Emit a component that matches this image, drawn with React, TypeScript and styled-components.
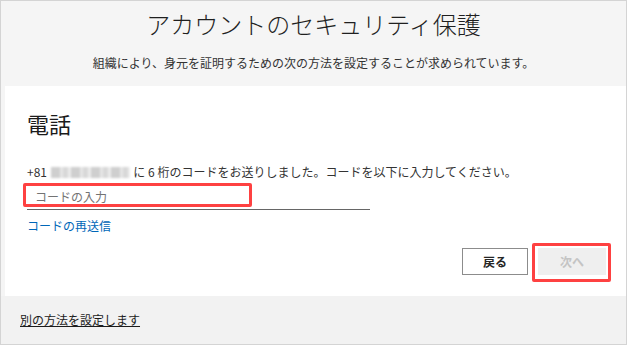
import React from 'react';
import styled, { createGlobalStyle } from 'styled-components';

const GlobalStyle = createGlobalStyle`
  body {
    margin: 0;
    background: #ffffff;
    font-family: "Noto Sans CJK JP", "Noto Sans", sans-serif;
  }
`;

const Frame = styled.div`
  box-sizing: border-box;
  width: 627px;
  height: 345px;
  border: 1px solid #d4d4d4;
  background: #f5f5f5;
  display: flex;
  flex-direction: column;
  overflow: hidden;
`;

const Header = styled.header`
  height: 85px;
  padding-top: 7px;
  box-sizing: border-box;
  display: flex;
  flex-direction: column;
  align-items: center;
`;

const Title = styled.h1`
  margin: 0;
  font-size: 24px;
  line-height: 32px;
  font-weight: 300;
  color: #1f1f1f;
`;

const Subtitle = styled.p`
  margin: 14px 0 0;
  font-size: 12px;
  line-height: 18px;
  color: #333333;
`;

const Card = styled.main`
  height: 210px;
  margin-left: 4px;
  box-sizing: border-box;
  padding: 23px 20px 0 22px;
  background: #ffffff;
  display: flex;
  flex-direction: column;
`;

const Heading = styled.h2`
  margin: 0;
  font-size: 22px;
  line-height: 28px;
  font-weight: 400;
  color: #1b1b1b;
`;

const Message = styled.p`
  margin: 26px 0 0;
  font-size: 12px;
  line-height: 18px;
  color: #333333;
  white-space: nowrap;
`;

const Masked = styled.span`
  display: inline-block;
  width: 79px;
  height: 11px;
  margin: 0 1px;
  vertical-align: -1px;
  background: repeating-linear-gradient(
    90deg,
    #cfcfcf 0 9px,
    #e6e6e6 9px 12px,
    #d8d8d8 12px 17px,
    #ececec 17px 20px
  );
  filter: blur(0.8px);
`;

const InputWrap = styled.div`
  position: relative;
  margin-top: 2px;
  width: 343px;
`;

const CodeInput = styled.input`
  box-sizing: border-box;
  width: 100%;
  height: 25px;
  border: none;
  border-bottom: 1px solid #666666;
  padding: 0 0 0 8px;
  background: transparent;
  font-family: inherit;
  font-size: 12px;
  color: #1b1b1b;
  outline: none;

  &::placeholder {
    color: #737373;
  }
`;

const Highlight = styled.span<{ $inset: string }>`
  position: absolute;
  inset: ${(p) => p.$inset};
  border: 3px solid #fe4141;
  border-radius: 2px;
  pointer-events: none;
`;

const InputHighlight = styled(Highlight)`
  width: 229px;
  height: 24px;
  box-sizing: border-box;
`;

const Link = styled.a`
  align-self: flex-start;
  margin-top: 7px;
  font-size: 12px;
  line-height: 18px;
  color: #0067b8;
  text-decoration: none;
  cursor: pointer;
`;

const Actions = styled.div`
  display: flex;
  justify-content: flex-end;
  gap: 10px;
  margin-top: 13px;
`;

const Button = styled.button<{ $disabled?: boolean }>`
  position: relative;
  box-sizing: border-box;
  width: ${(p) => (p.$disabled ? '68px' : '66px')};
  height: 27px;
  padding: 0;
  font-family: inherit;
  font-size: 12px;
  font-weight: 700;
  border: 1px solid ${(p) => (p.$disabled ? '#efefef' : '#8c8c8c')};
  background: ${(p) => (p.$disabled ? '#efefef' : '#ffffff')};
  color: ${(p) => (p.$disabled ? '#c4c4c4' : '#262626')};
  cursor: ${(p) => (p.$disabled ? 'default' : 'pointer')};
`;

const Footer = styled.footer`
  flex: 1;
  background: #f2f2f2;
  display: flex;
  align-items: center;
  padding: 0 0 1px 19px;
`;

const FooterLink = styled.a`
  font-size: 12px;
  line-height: 18px;
  color: #1b1b1b;
  text-decoration: underline;
  cursor: pointer;
`;

const App = () => {
  return (
    <>
      <GlobalStyle />
      <Frame>
        <Header>
          <Title>アカウントのセキュリティ保護</Title>
          <Subtitle>組織により、身元を証明するための次の方法を設定することが求められています。</Subtitle>
        </Header>
        <Card>
          <Heading>電話</Heading>
          <Message>
            +81 <Masked /> に 6 桁のコードをお送りしました。コードを以下に入力してください。
          </Message>
          <InputWrap>
            <CodeInput placeholder="コードの入力" />
            <InputHighlight $inset="0 auto auto -4px" />
          </InputWrap>
          <Link>コードの再送信</Link>
          <Actions>
            <Button>戻る</Button>
            <Button $disabled>
              次へ
              <Highlight $inset="-6px -6px -8px -7px" />
            </Button>
          </Actions>
        </Card>
        <Footer>
          <FooterLink>別の方法を設定します</FooterLink>
        </Footer>
      </Frame>
    </>
  );
};

export default App;
